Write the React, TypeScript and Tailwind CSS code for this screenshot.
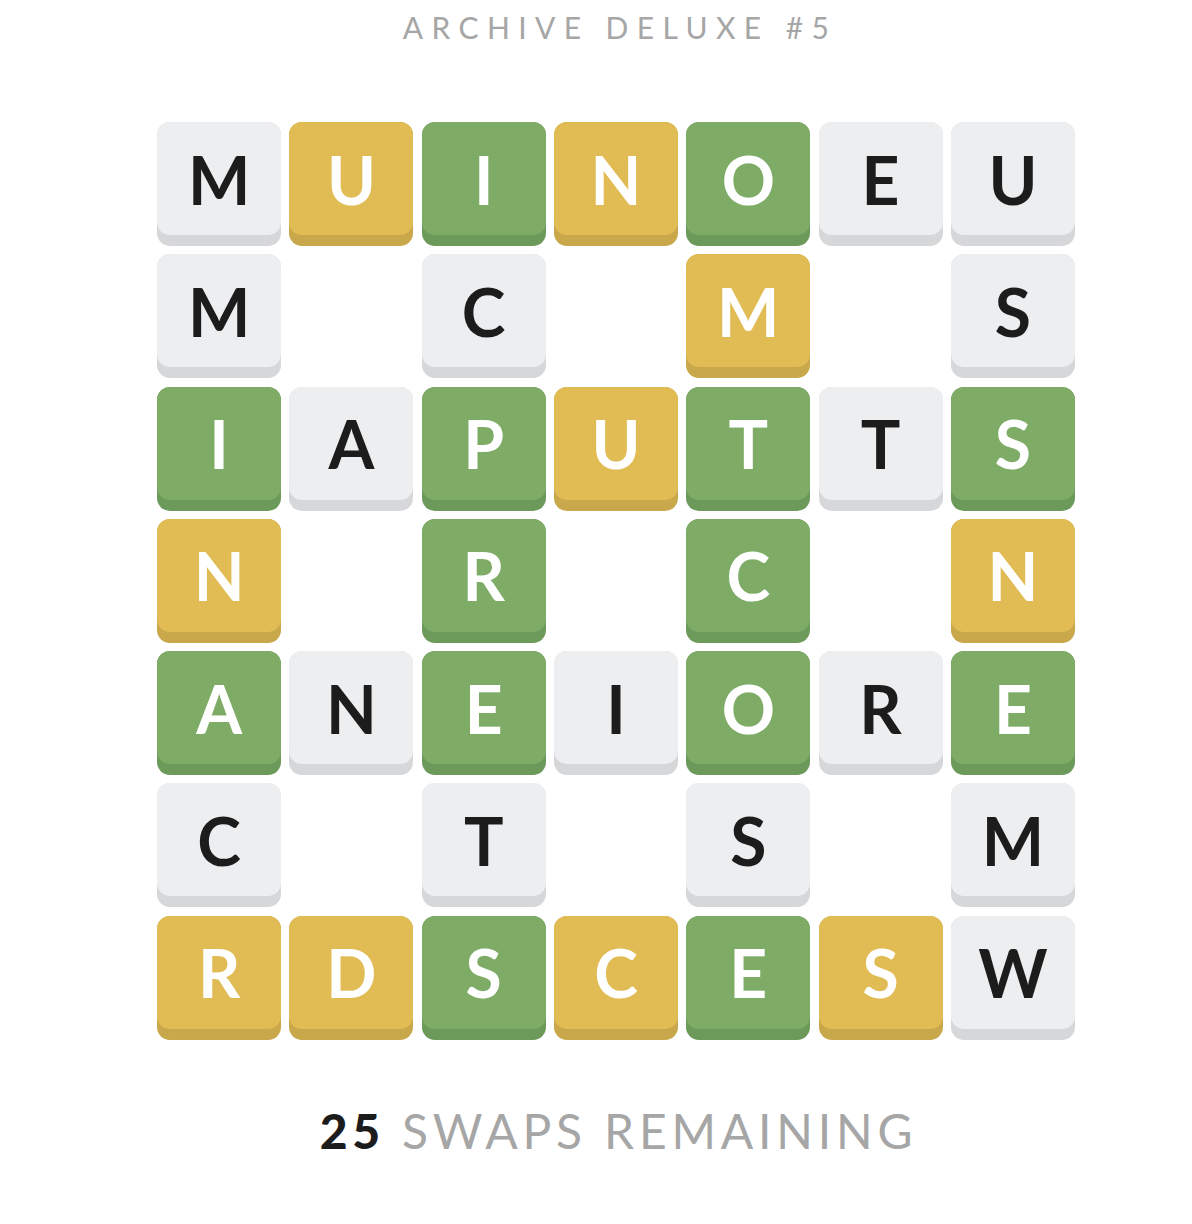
import React from 'react';

type Tone = 'g' | 'y' | 'G' | null;

const rows: [string, Tone][][] = [
  [['M', 'g'], ['U', 'y'], ['I', 'G'], ['N', 'y'], ['O', 'G'], ['E', 'g'], ['U', 'g']],
  [['M', 'g'], ['', null], ['C', 'g'], ['', null], ['M', 'y'], ['', null], ['S', 'g']],
  [['I', 'G'], ['A', 'g'], ['P', 'G'], ['U', 'y'], ['T', 'G'], ['T', 'g'], ['S', 'G']],
  [['N', 'y'], ['', null], ['R', 'G'], ['', null], ['C', 'G'], ['', null], ['N', 'y']],
  [['A', 'G'], ['N', 'g'], ['E', 'G'], ['I', 'g'], ['O', 'G'], ['R', 'g'], ['E', 'G']],
  [['C', 'g'], ['', null], ['T', 'g'], ['', null], ['S', 'g'], ['', null], ['M', 'g']],
  [['R', 'y'], ['D', 'y'], ['S', 'G'], ['C', 'y'], ['E', 'G'], ['S', 'y'], ['W', 'g']],
];

const tones = {
  g: { base: 'bg-[#d6d7d9]', face: 'bg-[#edeef0] text-[#1c1c1c]' },
  y: { base: 'bg-[#c8a84a]', face: 'bg-[#e1bc54] text-white' },
  G: { base: 'bg-[#6c9a5a]', face: 'bg-[#7eac67] text-white' },
};

function Tile({ letter, tone }: { letter: string; tone: Tone }) {
  if (!tone) return <div className="w-[124px] h-[124px]" />;
  const t = tones[tone];
  return (
    <div className={`w-[124px] h-[124px] rounded-[13px] pb-[11px] ${t.base}`}>
      <div
        className={`h-full w-full rounded-[13px] flex items-center justify-center pt-[2px] text-[66px] font-bold leading-none ${t.face}`}
      >
        {letter}
      </div>
    </div>
  );
}

export default function App() {
  return (
    <div className="min-h-[1224px] bg-white pl-10 flex flex-col items-center font-['Lato',sans-serif]">
      <h1 className="mt-[10px] pl-[8px] text-[30px] leading-[34px] tracking-[0.28em] text-[#a6a6a6] font-normal">
        ARCHIVE DELUXE #5
      </h1>
      <div className="mt-[78px] grid grid-cols-[repeat(7,124px)] gap-[8.3px]">
        {rows.flatMap((row, r) =>
          row.map(([letter, tone], c) => <Tile key={`${r}-${c}`} letter={letter} tone={tone} />)
        )}
      </div>
      <div className="mt-[62px] pl-[5px] text-[48px] leading-[58px] tracking-[0.1em] text-[#a6a6a6]">
        <span className="font-black text-[#1c1c1c]">25</span> SWAPS REMAINING
      </div>
    </div>
  );
}
